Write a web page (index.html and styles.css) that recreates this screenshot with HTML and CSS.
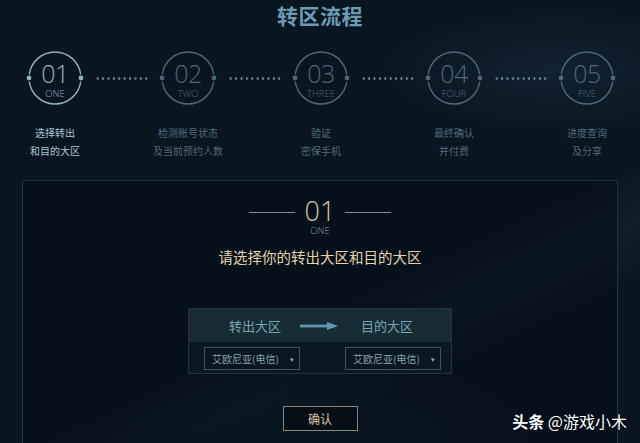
FILE: index.html
```html
<!DOCTYPE html>
<html lang="zh-CN">
<head>
<meta charset="utf-8">
<title>转区流程</title>
<link rel="stylesheet" href="styles.css">
</head>
<body>
<main class="page">
  <h1 class="title">转区流程</h1>

  <ol class="steps">
    <li class="step is-active">
      <div class="ring">
        <svg class="ring-art" viewBox="-2 -2 60 60" aria-hidden="true">
          <path d="M2.25 24.4 A26 26 0 0 1 53.75 24.4 M2.25 31.6 A26 26 0 0 0 53.75 31.6" fill="none" stroke="currentColor" stroke-width="1.4"/>
          <circle cx="2" cy="28" r="2.4" fill="currentColor"/>
          <circle cx="54" cy="28" r="2.4" fill="currentColor"/>
        </svg>
        <span class="num">01</span>
        <span class="en">ONE</span>
      </div>
      <p class="label">选择转出<br>和目的大区</p>
    </li>
    <li class="link"></li>
    <li class="step">
      <div class="ring">
        <svg class="ring-art" viewBox="-2 -2 60 60" aria-hidden="true">
          <path d="M2.25 24.4 A26 26 0 0 1 53.75 24.4 M2.25 31.6 A26 26 0 0 0 53.75 31.6" fill="none" stroke="currentColor" stroke-width="1.4"/>
          <circle cx="2" cy="28" r="2.4" fill="currentColor"/>
          <circle cx="54" cy="28" r="2.4" fill="currentColor"/>
        </svg>
        <span class="num">02</span>
        <span class="en">TWO</span>
      </div>
      <p class="label">检测账号状态<br>及当前预约人数</p>
    </li>
    <li class="link"></li>
    <li class="step">
      <div class="ring">
        <svg class="ring-art" viewBox="-2 -2 60 60" aria-hidden="true">
          <path d="M2.25 24.4 A26 26 0 0 1 53.75 24.4 M2.25 31.6 A26 26 0 0 0 53.75 31.6" fill="none" stroke="currentColor" stroke-width="1.4"/>
          <circle cx="2" cy="28" r="2.4" fill="currentColor"/>
          <circle cx="54" cy="28" r="2.4" fill="currentColor"/>
        </svg>
        <span class="num">03</span>
        <span class="en">THREE</span>
      </div>
      <p class="label">验证<br>密保手机</p>
    </li>
    <li class="link"></li>
    <li class="step">
      <div class="ring">
        <svg class="ring-art" viewBox="-2 -2 60 60" aria-hidden="true">
          <path d="M2.25 24.4 A26 26 0 0 1 53.75 24.4 M2.25 31.6 A26 26 0 0 0 53.75 31.6" fill="none" stroke="currentColor" stroke-width="1.4"/>
          <circle cx="2" cy="28" r="2.4" fill="currentColor"/>
          <circle cx="54" cy="28" r="2.4" fill="currentColor"/>
        </svg>
        <span class="num">04</span>
        <span class="en">FOUR</span>
      </div>
      <p class="label">最终确认<br>并付费</p>
    </li>
    <li class="link"></li>
    <li class="step">
      <div class="ring">
        <svg class="ring-art" viewBox="-2 -2 60 60" aria-hidden="true">
          <path d="M2.25 24.4 A26 26 0 0 1 53.75 24.4 M2.25 31.6 A26 26 0 0 0 53.75 31.6" fill="none" stroke="currentColor" stroke-width="1.4"/>
          <circle cx="2" cy="28" r="2.4" fill="currentColor"/>
          <circle cx="54" cy="28" r="2.4" fill="currentColor"/>
        </svg>
        <span class="num">05</span>
        <span class="en">FIVE</span>
      </div>
      <p class="label">进度查询<br>及分享</p>
    </li>
  </ol>

  <section class="panel">
    <div class="panel-head">
      <span class="rule"></span>
      <span class="big">01</span>
      <span class="rule"></span>
    </div>
    <div class="panel-en">ONE</div>
    <p class="prompt">请选择你的转出大区和目的大区</p>

    <div class="region">
      <div class="region-head">
        <span class="region-name">转出大区</span>
        <svg class="arrow" width="38" height="8" viewBox="0 0 38 8" aria-hidden="true">
          <rect x="0" y="2.6" width="28" height="2.8" fill="currentColor"/>
          <path d="M27 0 L38 4 L27 8 Z" fill="currentColor"/>
        </svg>
        <span class="region-name">目的大区</span>
      </div>
      <div class="region-body">
        <div class="select">艾欧尼亚(电信)<span class="caret">▾</span></div>
        <div class="select">艾欧尼亚(电信)<span class="caret">▾</span></div>
      </div>
    </div>

    <button class="confirm" type="button">确认</button>
  </section>
</main>

<div class="watermark"><b>头条</b> @游戏小木</div>
</body>
</html>
```

FILE: styles.css
```css
html, body {
  margin: 0;
  padding: 0;
}

body {
  width: 640px;
  height: 443px;
  overflow: hidden;
  position: relative;
  font-family: "Noto Sans CJK SC", "Open Sans", sans-serif;
  background:
    linear-gradient(155deg, transparent 62%, rgba(60, 110, 130, 0.10) 70%, transparent 78%),
    radial-gradient(ellipse 260px 90px at 560px 70px, rgba(40, 80, 100, 0.22), transparent 70%),
    radial-gradient(ellipse 300px 120px at 330px 440px, rgba(20, 60, 70, 0.25), transparent 70%),
    #0a1522;
}

.page {
  display: flex;
  flex-direction: column;
}

.title {
  margin: 0;
  padding-top: 3px;
  text-align: center;
  font-size: 21px;
  line-height: 24px;
  font-weight: 700;
  color: #6a9db2;
  letter-spacing: 0.5px;
}

/* step tracker */
.steps {
  list-style: none;
  margin: 23px 0 0;
  padding: 0 0 0 27px;
  display: flex;
  align-items: flex-start;
}

.step {
  width: 56px;
  flex: none;
  display: flex;
  flex-direction: column;
  align-items: center;
  color: #4b6977;
}

.step.is-active {
  color: #8db3c2;
}

.ring {
  position: relative;
  width: 56px;
  height: 56px;
  display: flex;
  flex-direction: column;
  align-items: center;
  box-sizing: border-box;
  padding-top: 10px;
}

.ring-art {
  position: absolute;
  left: -2px;
  top: -2px;
  width: 60px;
  height: 60px;
}

.num {
  font-family: "Open Sans", "Lato", sans-serif;
  font-weight: 300;
  font-size: 25px;
  line-height: 26px;
  letter-spacing: -0.5px;
}

.en {
  font-family: "Open Sans", "Lato", sans-serif;
  font-weight: 300;
  font-size: 9.5px;
  line-height: 12px;
  margin-top: 2px;
}

.label {
  margin: 18px 0 0;
  white-space: nowrap;
  text-align: center;
  font-size: 10px;
  line-height: 18px;
  color: #4e6a78;
}

.is-active .label {
  color: #a9c6d2;
}

.link {
  width: 77px;
  flex: none;
  height: 56px;
  box-sizing: border-box;
  padding: 0 12px;
  display: flex;
  align-items: center;
}

.link::before {
  content: "";
  display: block;
  width: 100%;
  height: 3px;
  background-image: radial-gradient(circle, #6a8c9a 1px, transparent 1.4px);
  background-size: 5.4px 3px;
  background-repeat: repeat-x;
}

/* main panel */
.panel {
  margin: 20px 22px 0;
  height: 300px;
  border: 1px solid #23323f;
  border-bottom: none;
  background: rgba(3, 10, 20, 0.45);
  display: flex;
  flex-direction: column;
  align-items: center;
  padding-top: 17px;
}

.panel-head {
  display: flex;
  align-items: center;
  gap: 10px;
}

.rule {
  width: 46px;
  height: 1px;
  background: #868b8c;
  margin-top: 2px;
}

.big {
  font-family: "Open Sans", "Lato", sans-serif;
  font-weight: 300;
  font-size: 27px;
  line-height: 26px;
  color: #dcc89c;
}

.panel-en {
  font-family: "Open Sans", "Lato", sans-serif;
  font-weight: 300;
  font-size: 9.5px;
  line-height: 11px;
  color: #8e9ca3;
  margin-top: 1px;
}

.prompt {
  margin: 11px 0 0;
  font-size: 14.5px;
  line-height: 20px;
  color: #e6d3ab;
}

.region {
  margin-top: 41px;
  width: 264px;
  border: 1px solid #1f3340;
  box-sizing: border-box;
}

.region-head {
  height: 33px;
  background: #182c36;
  display: flex;
  align-items: center;
  padding-left: 39px;
  color: #78a3b4;
  font-size: 13px;
}

.region-name {
  width: 54px;
  text-align: center;
}

.arrow {
  margin: 1px 22px 0 18px;
  color: #5d9ab1;
}

.region-body {
  height: 31px;
  background: #0b1822;
  box-sizing: border-box;
  padding: 5px 10px 3px 15px;
  display: flex;
  justify-content: space-between;
}

.select {
  width: 96px;
  height: 23px;
  box-sizing: border-box;
  border: 1px solid #3a5561;
  background: #0a1620;
  display: flex;
  align-items: center;
  justify-content: space-between;
  padding: 0 5px 0 7px;
  font-size: 10px;
  color: #85a5b4;
}

.caret {
  font-size: 7px;
  color: #9ab;
}

.confirm {
  margin-top: 32px;
  width: 75px;
  height: 25px;
  border: 1px solid #8b8576;
  background: #060e18;
  color: #d9c8a2;
  font-family: "Noto Sans CJK SC", sans-serif;
  font-size: 12px;
  padding: 0;
}

.watermark {
  position: absolute;
  right: 13px;
  bottom: 13px;
  font-size: 16px;
  line-height: 18px;
  color: #ffffff;
  text-shadow: 0 0 2px rgba(0, 0, 0, 0.6);
}

.watermark b {
  font-weight: 700;
}
```
